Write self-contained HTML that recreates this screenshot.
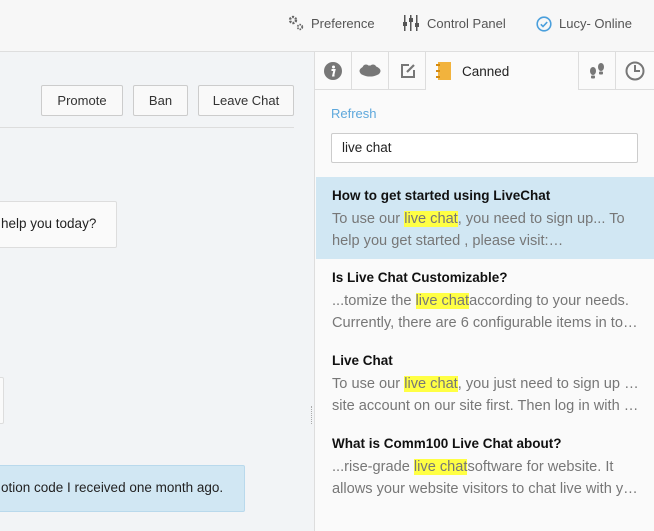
<!DOCTYPE html>
<html><head><meta charset="utf-8"><style>
*{box-sizing:border-box;margin:0;padding:0}
body{width:654px;height:531px;overflow:hidden;font-family:"Liberation Sans",sans-serif;background:#f2f4f6;position:relative;color:#222}
.top{position:absolute;left:0;top:0;width:654px;height:52px;background:#f7f7f7;border-bottom:1px solid #dedede}
.top span{position:absolute;top:16px;font-size:13px;color:#555}
.btn{position:absolute;top:85px;height:31px;border:1px solid #ccc;background:#f9f9f9;font-size:13px;color:#333;text-align:center;line-height:29px;border-radius:2px}
.bub{position:absolute;background:#fafafa;border:1px solid #ddd;font-size:13.5px;line-height:44px;border-radius:2px;color:#222}
.right{position:absolute;left:314px;top:52px;width:340px;height:479px;background:#fafafa;border-left:1px solid #ddd}
.tab{position:absolute;top:0;height:38px;border-right:1px solid #ddd;border-bottom:1px solid #ddd}
.item{position:absolute;left:1px;width:339px;padding-left:16px}
.item b{display:block;font-size:13.5px;color:#111;height:20px}
.item p{font-size:14.6px;color:#777;line-height:22px;white-space:nowrap;overflow:hidden;text-overflow:ellipsis;width:308px}
mark{background:#ffff44;color:#777}
</style></head><body>
<div class="top">
<svg style="position:absolute;left:288px;top:15px" width="16" height="16" viewBox="0 0 16 16"><circle cx="5" cy="5" r="3" fill="none" stroke="#666" stroke-width="2.4" stroke-dasharray="2 1.2"/><circle cx="12" cy="12" r="2.3" fill="none" stroke="#666" stroke-width="1.8" stroke-dasharray="1.5 1"/></svg>
<span style="left:311px">Preference</span>
<svg style="position:absolute;left:403px;top:15px" width="16" height="16" viewBox="0 0 16 16" fill="#555"><rect x="1" y="0" width="1.5" height="16"/><rect x="0" y="7" width="4" height="4"/><rect x="7" y="0" width="1.5" height="16"/><rect x="6" y="3" width="4" height="4"/><rect x="13" y="0" width="1.5" height="16"/><rect x="12" y="8" width="4" height="4"/></svg>
<span style="left:427px">Control Panel</span>
<svg style="position:absolute;left:536px;top:16px" width="16" height="16" viewBox="0 0 16 16"><circle cx="8" cy="8" r="6.8" fill="none" stroke="#4a9fdc" stroke-width="1.6"/><path d="M4.8 8.3l2.2 2.2 4.2-4.4" fill="none" stroke="#4a9fdc" stroke-width="1.6"/></svg>
<span style="left:559px">Lucy- Online</span>
</div>
<div class="btn" style="left:41px;width:82px">Promote</div>
<div class="btn" style="left:133px;width:55px">Ban</div>
<div class="btn" style="left:198px;width:96px">Leave Chat</div>
<div style="position:absolute;left:0;top:127px;width:294px;height:1px;background:#ddd"></div>
<div class="bub" style="left:-10px;top:201px;width:127px;height:47px;padding-left:10px">help you today?</div>
<div class="bub" style="left:-10px;top:377px;width:14px;height:47px"></div>
<div class="bub" style="left:-10px;top:465px;width:255px;height:47px;background:#d1e7f3;border-color:#b9d9ec;padding-left:10px">otion code I received one month ago.</div>
<div style="position:absolute;left:311px;top:406px;width:1px;height:18px;border-left:1px dotted #aaa"></div>
<div class="right">
<div class="tab" style="left:0;width:37px"><svg style="position:absolute;left:9px;top:10px" width="18" height="18"><circle cx="9" cy="9" r="9" fill="#777"/><circle cx="9.5" cy="5" r="1.5" fill="#fff"/><path d="M7.5 8h3l-1.3 5.5h1.3" stroke="#fff" stroke-width="2" fill="none"/></svg></div>
<div class="tab" style="left:37px;width:37px"><svg style="position:absolute;left:7px;top:12px" width="22" height="14"><ellipse cx="11" cy="7" rx="10.5" ry="5.5" fill="#777"/><circle cx="7" cy="4" r="3.5" fill="#777"/><circle cx="14" cy="4" r="3.5" fill="#777"/></svg></div>
<div class="tab" style="left:74px;width:37px"><svg style="position:absolute;left:11px;top:11px" width="16" height="16"><path d="M9 2H2v12h12V7" fill="none" stroke="#777" stroke-width="2"/><path d="M7 9l7-7" stroke="#777" stroke-width="2.2"/></svg></div>
<div style="position:absolute;left:111px;top:0;width:153px;height:38px;border-right:1px solid #ddd">
<svg style="position:absolute;left:10px;top:10px" width="16" height="18"><rect x="2" y="0" width="13" height="18" fill="#f2b33d"/><rect x="0" y="2" width="4" height="2" fill="#d48a10"/><rect x="0" y="8" width="4" height="2" fill="#d48a10"/><rect x="0" y="14" width="4" height="2" fill="#d48a10"/></svg>
<span style="position:absolute;left:36px;top:12px;font-size:13.5px;color:#222">Canned</span></div>
<div class="tab" style="left:264px;width:37px;border-left:0"><svg style="position:absolute;left:9px;top:10px" width="18" height="18" fill="#777"><ellipse cx="5" cy="9" rx="3" ry="4"/><rect x="3" y="13.5" width="4" height="3" rx="1"/><ellipse cx="13" cy="5" rx="3" ry="4"/><rect x="11" y="9.5" width="4" height="3" rx="1"/></svg></div>
<div class="tab" style="left:301px;width:39px;border-right:0"><svg style="position:absolute;left:9px;top:9px" width="20" height="20"><circle cx="10" cy="10" r="8.5" fill="none" stroke="#777" stroke-width="2"/><path d="M10 4v6h5" fill="none" stroke="#777" stroke-width="2"/></svg></div>
<div style="position:absolute;left:264px;top:37px;width:76px;height:1px;background:#ddd"></div>
<div style="position:absolute;left:16px;top:54px;font-size:13px;color:#5ea8dc">Refresh</div>
<div style="position:absolute;left:16px;top:81px;width:307px;height:30px;background:#fff;border:1px solid #ccc;border-radius:2px;font-size:13.5px;line-height:28px;padding-left:10px">live chat</div>
<div class="item" style="top:125px;height:82px;background:#d1e7f3;padding-top:11px"><b>How to get started using LiveChat</b><p>To use our <mark>live chat</mark>, you need to sign up... To</p><p>help you get started , please visit:…</p></div>
<div class="item" style="top:218px"><b>Is Live Chat Customizable?</b><p>...tomize the <mark>live chat</mark>according to your needs.</p><p>Currently, there are 6 configurable items in total in total</p></div>
<div class="item" style="top:301px"><b>Live Chat</b><p>To use our <mark>live chat</mark>, you just need to sign up for a</p><p>site account on our site first. Then log in with your account</p></div>
<div class="item" style="top:384px"><b>What is Comm100 Live Chat about?</b><p>...rise-grade <mark>live chat</mark>software for website. It</p><p>allows your website visitors to chat live with your agents</p></div>
</div>
</body></html>
